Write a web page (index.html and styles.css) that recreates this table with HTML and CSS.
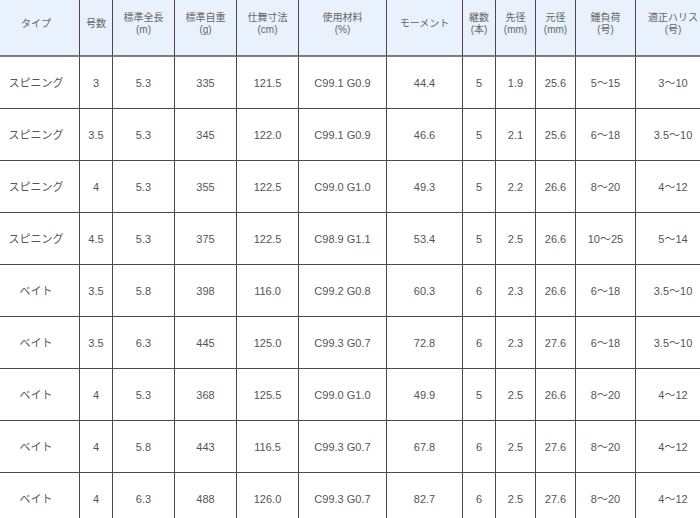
FILE: index.html
```html
<!DOCTYPE html>
<html lang="ja">
<head>
<meta charset="utf-8">
<title>スペック表</title>
<link rel="stylesheet" href="styles.css">
</head>
<body>
<table class="spec">
  <colgroup>
    <col class="c1"><col class="c2"><col class="c3"><col class="c4"><col class="c5"><col class="c6"><col class="c7"><col class="c8"><col class="c9"><col class="c10"><col class="c11"><col class="c12">
  </colgroup>
  <thead>
    <tr>
      <th>タイプ</th>
      <th>号数</th>
      <th>標準全長<br>(m)</th>
      <th>標準自重<br>(g)</th>
      <th>仕舞寸法<br>(cm)</th>
      <th>使用材料<br>(%)</th>
      <th>モーメント</th>
      <th>継数<br>(本)</th>
      <th>先径<br>(mm)</th>
      <th>元径<br>(mm)</th>
      <th>錘負荷<br>(号)</th>
      <th>適正ハリス<br>(号)</th>
    </tr>
  </thead>
  <tbody>
    <tr><td>スピニング</td><td>3</td><td>5.3</td><td>335</td><td>121.5</td><td>C99.1 G0.9</td><td>44.4</td><td>5</td><td>1.9</td><td>25.6</td><td>5～15</td><td>3～10</td></tr>
    <tr><td>スピニング</td><td>3.5</td><td>5.3</td><td>345</td><td>122.0</td><td>C99.1 G0.9</td><td>46.6</td><td>5</td><td>2.1</td><td>25.6</td><td>6～18</td><td>3.5～10</td></tr>
    <tr><td>スピニング</td><td>4</td><td>5.3</td><td>355</td><td>122.5</td><td>C99.0 G1.0</td><td>49.3</td><td>5</td><td>2.2</td><td>26.6</td><td>8～20</td><td>4～12</td></tr>
    <tr><td>スピニング</td><td>4.5</td><td>5.3</td><td>375</td><td>122.5</td><td>C98.9 G1.1</td><td>53.4</td><td>5</td><td>2.5</td><td>26.6</td><td>10～25</td><td>5～14</td></tr>
    <tr><td>ベイト</td><td>3.5</td><td>5.8</td><td>398</td><td>116.0</td><td>C99.2 G0.8</td><td>60.3</td><td>6</td><td>2.3</td><td>26.6</td><td>6～18</td><td>3.5～10</td></tr>
    <tr><td>ベイト</td><td>3.5</td><td>6.3</td><td>445</td><td>125.0</td><td>C99.3 G0.7</td><td>72.8</td><td>6</td><td>2.3</td><td>27.6</td><td>6～18</td><td>3.5～10</td></tr>
    <tr><td>ベイト</td><td>4</td><td>5.3</td><td>368</td><td>125.5</td><td>C99.0 G1.0</td><td>49.9</td><td>5</td><td>2.5</td><td>26.6</td><td>8～20</td><td>4～12</td></tr>
    <tr><td>ベイト</td><td>4</td><td>5.8</td><td>443</td><td>116.5</td><td>C99.3 G0.7</td><td>67.8</td><td>6</td><td>2.5</td><td>27.6</td><td>8～20</td><td>4～12</td></tr>
    <tr><td>ベイト</td><td>4</td><td>6.3</td><td>488</td><td>126.0</td><td>C99.3 G0.7</td><td>82.7</td><td>6</td><td>2.5</td><td>27.6</td><td>8～20</td><td>4～12</td></tr>
  </tbody>
</table>
</body>
</html>
```
FILE: styles.css
```css
html, body {
  margin: 0;
  padding: 0;
  background: #ffffff;
  overflow: hidden;
}
body {
  width: 700px;
  height: 518px;
}
.spec {
  margin: -7px 0 0 -7px;
  border-collapse: separate;
  border-spacing: 0;
  table-layout: fixed;
  width: 718px;
  font-family: "Liberation Sans", "Noto Sans CJK JP", sans-serif;
  color: #555555;
}
.spec .c1 { width: 87px; }
.spec .c2 { width: 33px; }
.spec .c3 { width: 62px; }
.spec .c4 { width: 62px; }
.spec .c5 { width: 62px; }
.spec .c6 { width: 88px; }
.spec .c7 { width: 76px; }
.spec .c8 { width: 33px; }
.spec .c9 { width: 40px; }
.spec .c10 { width: 40px; }
.spec .c11 { width: 60px; }
.spec .c12 { width: 75px; }
.spec th,
.spec td {
  box-sizing: border-box;
  padding: 0;
  text-align: center;
  vertical-align: middle;
  border-right: 1px solid #4a4a4a;
  border-bottom: 1px solid #4a4a4a;
  white-space: nowrap;
}
.spec th {
  height: 64px;
  background: #e8f1fc;
  border-bottom: 2px solid #7d7d7d;
  font-weight: normal;
  font-size: 10px;
  line-height: 12px;
  color: #666666;
}
.spec td {
  height: 52px;
  font-size: 11px;
  line-height: 14px;
}
```
